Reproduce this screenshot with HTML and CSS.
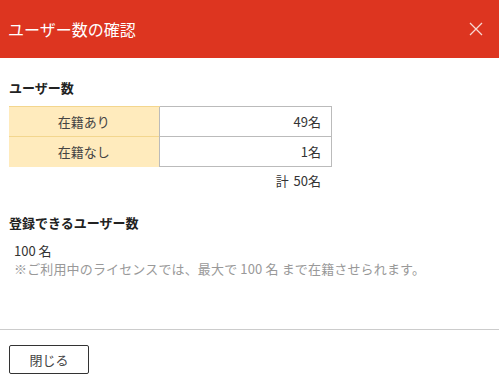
FILE: index.html
```html
<!DOCTYPE html>
<html lang="ja">
<head>
  <meta charset="UTF-8">
  <title>ユーザー数の確認</title>
  <link rel="stylesheet" href="styles.css">
</head>
<body>

  <div class="dialog">
    <div class="dialog-header">
      <h1>ユーザー数の確認</h1>
      <button class="close-btn" aria-label="閉じる">
        <svg width="14" height="14" viewBox="0 0 14 14">
          <path d="M1 1 L13 13 M13 1 L1 13" stroke="#f8d8d2" stroke-width="1.3" fill="none"/>
        </svg>
      </button>
    </div>

    <div class="dialog-body">
      <h2>ユーザー数</h2>
      <table class="count-table">
        <tr><th>在籍あり</th><td>49名</td></tr>
        <tr><th>在籍なし</th><td>1名</td></tr>
      </table>
      <p class="total">計 50名</p>

      <h2 class="second">登録できるユーザー数</h2>
      <p class="limit">100 名</p>
      <p class="note">※ご利用中のライセンスでは、最大で 100 名 まで在籍させられます。</p>
    </div>

    <div class="dialog-footer">
      <button class="btn">閉じる</button>
    </div>
  </div>

</body>
</html>
```

FILE: styles.css
```css
* {
  box-sizing: border-box;
}

html, body {
  margin: 0;
  padding: 0;
  background: #fff;
  font-family: "Noto Sans CJK JP", "Noto Sans", sans-serif;
  font-size: 13px;
  color: #333;
}

.dialog-header {
  height: 58px;
  background: #dd3520;
  display: flex;
  align-items: center;
  justify-content: space-between;
  padding: 0 16px 0 8px;
}

.dialog-header h1 {
  margin: 0;
  font-size: 16px;
  font-weight: normal;
  color: #fff;
  line-height: 24px;
}

.close-btn {
  background: none;
  border: 0;
  padding: 0;
  width: 14px;
  height: 14px;
  display: flex;
  cursor: pointer;
}

.dialog-body {
  padding: 20px 9px 0 9px;
  height: 271px;
}

h2 {
  margin: 0;
  font-size: 13px;
  font-weight: bold;
  color: #222;
  line-height: 19px;
}

h2.second {
  margin-top: 23px;
}

.count-table {
  margin-top: 9px;
  width: 323px;
  border-collapse: collapse;
}

.count-table th,
.count-table td {
  height: 30px;
  padding: 0 10px;
  font-weight: normal;
  line-height: 19px;
}

.count-table th {
  width: 150px;
  background: #ffebbd;
  border-top: 1px solid #f3d68e;
  color: #444;
  text-align: center;
}

.count-table td {
  border: 1px solid #bbb;
  text-align: right;
  color: #333;
}

.total {
  margin: 4px 0 0 0;
  width: 323px;
  padding-right: 11px;
  text-align: right;
  line-height: 19px;
  word-spacing: 2px;
}

.limit {
  margin: 10px 0 0 5px;
  line-height: 18px;
}

.note {
  margin: 0 0 0 5px;
  color: #999;
  line-height: 18px;
  letter-spacing: 0.15px;
}

.dialog-footer {
  border-top: 1px solid #ccc;
  padding: 15px 9px;
}

.btn {
  width: 80px;
  height: 29px;
  background: #fff;
  border: 1px solid #333;
  border-radius: 2px;
  font-family: inherit;
  font-size: 13px;
  color: #444;
  cursor: pointer;
}
```
